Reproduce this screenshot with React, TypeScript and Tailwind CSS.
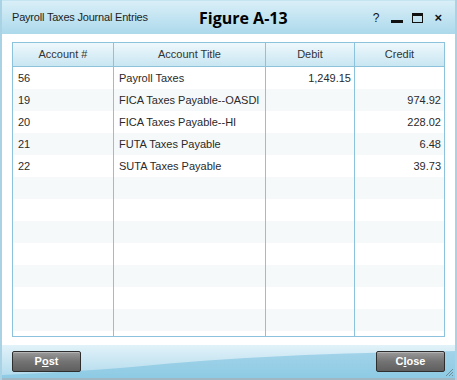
import React from 'react';

type Row = { acct: string; title: string; debit: string; credit: string };

const rows: Row[] = [
  { acct: '56', title: 'Payroll Taxes', debit: '1,249.15', credit: '' },
  { acct: '19', title: 'FICA Taxes Payable--OASDI', debit: '', credit: '974.92' },
  { acct: '20', title: 'FICA Taxes Payable--HI', debit: '', credit: '228.02' },
  { acct: '21', title: 'FUTA Taxes Payable', debit: '', credit: '6.48' },
  { acct: '22', title: 'SUTA Taxes Payable', debit: '', credit: '39.73' },
];

// pad with empty rows so the grid lines run to the bottom
const allRows: Row[] = [
  ...rows,
  ...Array.from({ length: 9 }, () => ({ acct: '', title: '', debit: '', credit: '' })),
];

const cols = 'grid grid-cols-[101px_152px_89px_89px]';

const btn =
  'relative z-10 w-[69px] h-[21px] rounded-[2px] border border-[#2e2e2e] bg-gradient-to-b from-[#9a9a9a] via-[#737373] to-[#5f5f5f] text-white text-[11px] font-bold shadow-[inset_0_1px_0_#b5b5b5]';

const App: React.FC = () => {
  return (
    <div
      className="w-[457px] h-[380px] flex flex-col overflow-hidden border-l-2 border-r-2 border-[#a9d3e5] bg-white text-[#222]"
      style={{ fontFamily: '"Liberation Sans", Arial, sans-serif' }}
    >
      {/* title bar */}
      <div className="h-[34px] shrink-0 flex items-center pl-[10px] pr-[13px] bg-gradient-to-b from-[#d9eff8] to-[#acd9eb] border-t border-[#c6e5f2]">
        <span className="text-[11px] tracking-[-0.2px] text-[#1e1e1e] w-[170px]">Payroll Taxes Journal Entries</span>
        <span
          className="ml-[17px] text-[16px] font-bold text-black"
          style={{ fontFamily: '"Open Sans", sans-serif' }}
        >
          Figure A-13
        </span>
        <div className="ml-auto flex items-center text-[#111]">
          <span className="text-[12px] leading-none">?</span>
          <span className="ml-[12px] w-[12px] h-[3px] bg-[#111] mt-[8px]" />
          <span className="ml-[9px] w-[11px] h-[10px] border border-[#111] border-t-[3px]" />
          <span className="ml-[11px] text-[13px] font-bold leading-none">×</span>
        </div>
      </div>

      {/* body */}
      <div className="flex-1 bg-white pt-[8px] px-[10px] pb-[8px] flex flex-col min-h-0">
        <div className="flex-1 border border-[#8cc2db] overflow-hidden bg-white min-h-0">
          <div className={`${cols} h-[24px] bg-gradient-to-b from-[#eef8fc] to-[#c9e6f2] border-b border-[#8cc2db] text-[11px] text-[#333]`}>
            <div className="flex items-center justify-center border-r border-[#8cc2db]">Account #</div>
            <div className="flex items-center justify-center border-r border-[#8cc2db]">Account Title</div>
            <div className="flex items-center justify-center border-r border-[#8cc2db]">Debit</div>
            <div className="flex items-center justify-center">Credit</div>
          </div>
          {allRows.map((r, i) => (
            <div
              key={i}
              className={`${cols} h-[22px] text-[11px] text-[#2a2a2a] ${i % 2 === 1 ? 'bg-[#f6f9fa]' : 'bg-white'}`}
            >
              <div className="flex items-center pl-[5px] border-r border-[#8cc2db]">{r.acct}</div>
              <div className="flex items-center pl-[5px] border-r border-[#8cc2db]">{r.title}</div>
              <div className="flex items-center justify-end pr-[3px] border-r border-[#8cc2db]">{r.debit}</div>
              <div className="flex items-center justify-end pr-[3px]">{r.credit}</div>
            </div>
          ))}
        </div>
      </div>

      {/* footer */}
      <div className="relative h-[35px] shrink-0 flex items-start justify-between pt-[6px] px-[10px] bg-gradient-to-b from-[#a6d6eb] to-[#8ecae4] border-b-2 border-[#9fb7c2]">
        <svg className="absolute inset-0" width="453" height="33" viewBox="0 0 453 33" preserveAspectRatio="none">
          <defs>
            <linearGradient id="swoosh" x1="0" y1="0" x2="0" y2="1">
              <stop offset="0" stopColor="#e2f2f9" />
              <stop offset="1" stopColor="#b4dced" />
            </linearGradient>
          </defs>
          <path d="M0 0 H453 V6 C330 8 230 12 130 22 C80 26 40 28 0 30 Z" fill="url(#swoosh)" />
        </svg>
        <button className={btn}>
          P<span className="underline">o</span>st
        </button>
        <button className={btn}>
          C<span className="underline">l</span>ose
        </button>
        <svg className="absolute right-[1px] bottom-[1px]" width="10" height="10" viewBox="0 0 10 10">
          <path d="M9 2 L2 9 M9 5 L5 9 M9 8 L8 9" stroke="#6d8c99" strokeWidth="1" />
        </svg>
      </div>
    </div>
  );
};

export default App;
